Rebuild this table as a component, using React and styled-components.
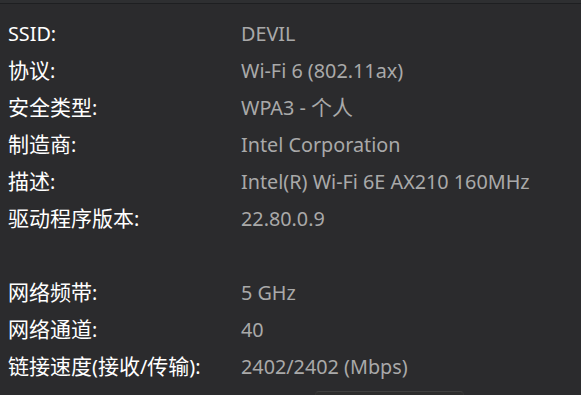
import React from "react";
import styled, { createGlobalStyle } from "styled-components";

const Global = createGlobalStyle`
  html, body {
    margin: 0;
    padding: 0;
    background: #2b2b2d;
    overflow: hidden;
  }
`;

const Panel = styled.section`
  width: 581px;
  height: 395px;
  overflow: hidden;
  background: #2b2b2d;
  font-family: "Noto Sans", "Noto Sans CJK SC", sans-serif;
  font-size: 19.8px;
`;

const TopStrip = styled.div`
  height: 3px;
  background: #2e2f31;
  border-bottom: 1px solid #1e1f21;
`;

const List = styled.dl`
  display: grid;
  grid-template-columns: 233px 1fr;
  grid-auto-rows: 37px;
  margin: 0;
  padding: 11px 0 0 8px;
`;

const Label = styled.dt`
  margin: 0;
  color: #ffffff;
  line-height: 37px;
  white-space: nowrap;
  padding-top: ${(p) => (p.$shift ? "6px" : "0")};
`;

const Value = styled.dd`
  margin: 0;
  color: #a9a9a9;
  line-height: 37px;
  white-space: nowrap;
`;

const Han = styled.span`
  font-family: "Noto Sans CJK SC", sans-serif;
  font-size: 21px;
  line-height: 0;
`;

const Spacer = styled.div`
  grid-column: 1 / -1;
`;

const CopyButton = styled.button`
  margin: 6px 0 0 74px;
  width: 149px;
  height: 32px;
  border-radius: 4px;
  border: 1px solid #353535;
  border-top-color: #3f3f3f;
  background: #2d2d2d;
  color: #fff;
  font: inherit;
  font-size: 14px;
`;

// wrap the Chinese runs so they get the slightly larger CJK size
const Text = ({ children }) =>
  children.split(/([\u3400-\u9fff]+)/).map((part, i) =>
    /[\u3400-\u9fff]/.test(part) ? <Han key={i}>{part}</Han> : part
  );

const rows = [
  ["SSID:", "DEVIL"],
  ["协议:", "Wi-Fi 6 (802.11ax)"],
  ["安全类型:", "WPA3 - 个人"],
  ["制造商:", "Intel Corporation"],
  ["描述:", "Intel(R) Wi-Fi 6E AX210 160MHz"],
  ["驱动程序版本:", "22.80.0.9"],
  null,
  ["网络频带:", "5 GHz"],
  ["网络通道:", "40"],
  ["链接速度(接收/传输):", "2402/2402 (Mbps)"],
];

export default function App() {
  return (
    <Panel>
      <Global />
      <TopStrip />
      <List>
        {rows.map((r, i) =>
          r ? (
            <React.Fragment key={i}>
              <Label>
                <Text>{r[0]}</Text>
              </Label>
              <Value>
                <Text>{r[1]}</Text>
              </Value>
            </React.Fragment>
          ) : (
            <Spacer key={i} />
          )
        )}
        <Label $shift>
          <Text>本地链接 IPv6 地址:</Text>
        </Label>
        <Value>
          <CopyButton>复制</CopyButton>
        </Value>
      </List>
    </Panel>
  );
}
